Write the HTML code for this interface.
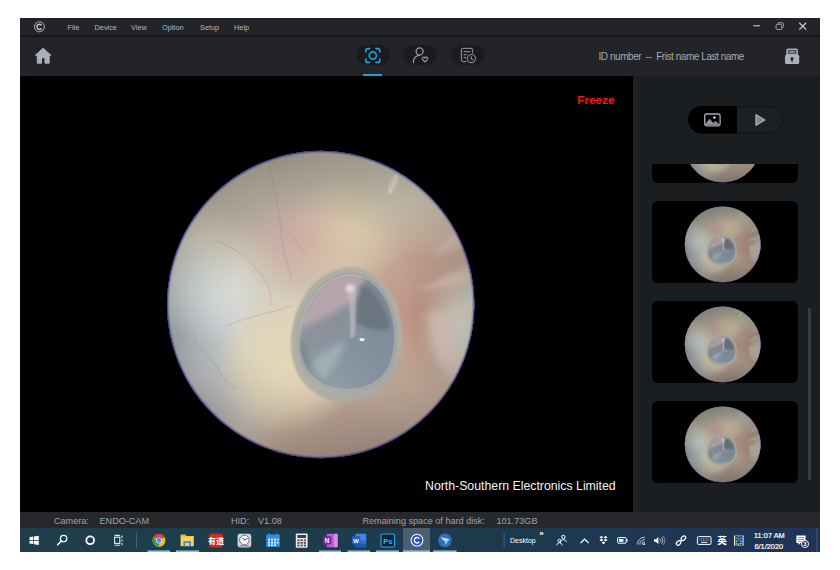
<!DOCTYPE html>
<html><head><meta charset="utf-8"><title>ENDO-CAM</title>
<style>
html,body{margin:0;padding:0;background:#fff;}
body{width:840px;height:570px;overflow:hidden;position:relative;font-family:"Liberation Sans",sans-serif;}
.abs{position:absolute;}
svg{display:block;}
#title{left:20px;top:18px;width:800px;height:17px;background:#23242a;}
#tline{left:20px;top:35px;width:800px;height:2px;background:#15161a;}
#tool{left:20px;top:37px;width:800px;height:39px;background:#222429;}
#video{left:20px;top:76px;width:613px;height:436px;background:#000;}
#side{left:633px;top:76px;width:187px;height:436px;background:#1b1e21;overflow:hidden;}
#list{left:0;top:88px;width:187px;height:348px;overflow:hidden;}
#status{left:20px;top:512px;width:800px;height:16px;background:#27282c;}
#task{left:20px;top:528px;width:800px;height:24px;background:linear-gradient(90deg,#1e3f4a 0%,#1c3a4d 62%,#1e3656 85%,#1f3358 100%);overflow:hidden;}
.menu{top:22.7px;font-size:7.35px;color:#b4b7c0;line-height:10px;white-space:nowrap;}
.pill{top:44.5px;width:34px;height:20.5px;border-radius:10.5px;background:#1a1b1e;}
.st{top:514.6px;font-size:9.1px;color:#a0a2a8;line-height:12px;white-space:nowrap;}
.thumb{left:19.3px;width:146px;height:82px;border-radius:6px;background:#000;overflow:hidden;}
.thumb svg{position:absolute;left:31.2px;top:3.4px;}
.ul{top:22.5px;height:1.5px;background:#86b9e6;}
.tt{color:#fff;font-size:7.5px;line-height:9px;white-space:nowrap;}
</style></head><body>
<svg width="0" height="0" style="position:absolute">
<defs>
    <clipPath id="cc"><circle cx="0.7" cy="3.5" r="153.7"/></clipPath>
    <clipPath id="ce"><path d="M32,-27 C46,-27 61,-17 70,4 C77,21 78,44 72,62 C65,81 47,90 27,90 C5,90 -15,78 -20,56 C-25,38 -20,14 -9,-3 C0,-17 16,-27 32,-27Z"/></clipPath>
    <filter id="b05" x="-20%" y="-20%" width="140%" height="140%"><feGaussianBlur stdDeviation="0.6"/></filter>
    <filter id="b1" x="-20%" y="-20%" width="140%" height="140%"><feGaussianBlur stdDeviation="1.2"/></filter>
    <filter id="b2" x="-20%" y="-20%" width="140%" height="140%"><feGaussianBlur stdDeviation="2"/></filter>
    <filter id="b3" x="-20%" y="-20%" width="140%" height="140%"><feGaussianBlur stdDeviation="3"/></filter>
    <filter id="b6" x="-30%" y="-30%" width="160%" height="160%"><feGaussianBlur stdDeviation="6"/></filter>
    <filter id="b12" x="-30%" y="-30%" width="160%" height="160%"><feGaussianBlur stdDeviation="12"/></filter>
    <radialGradient id="gL" cx="-152" cy="40" r="145" gradientUnits="userSpaceOnUse"><stop offset="0" stop-color="#aab4b6"/><stop offset=".35" stop-color="#c4ccce" stop-opacity=".95"/><stop offset=".7" stop-color="#d6d8ce" stop-opacity=".5"/><stop offset="1" stop-color="#dcdacc" stop-opacity="0"/></radialGradient><radialGradient id="gW" cx="-105" cy="-5" r="50" gradientUnits="userSpaceOnUse"><stop offset="0" stop-color="#dee3e4" stop-opacity=".75"/><stop offset="1" stop-color="#dee3e4" stop-opacity="0"/></radialGradient><radialGradient id="gLv" cx="-118" cy="118" r="78" gradientUnits="userSpaceOnUse"><stop offset="0" stop-color="#a8a4ac" stop-opacity=".8"/><stop offset="1" stop-color="#c0b8bc" stop-opacity="0"/></radialGradient>
    <radialGradient id="gR" cx="108" cy="12" r="115" gradientUnits="userSpaceOnUse"><stop offset="0" stop-color="#ba9080"/><stop offset=".5" stop-color="#c29e8e" stop-opacity=".9"/><stop offset="1" stop-color="#caa896" stop-opacity="0"/></radialGradient><radialGradient id="gRe" cx="180" cy="30" r="85" gradientUnits="userSpaceOnUse"><stop offset="0" stop-color="#e2e8da"/><stop offset=".5" stop-color="#d8dcce" stop-opacity=".95"/><stop offset=".75" stop-color="#d0d0c2" stop-opacity=".5"/><stop offset="1" stop-color="#c8c8b8" stop-opacity="0"/></radialGradient>
    <radialGradient id="gB" cx="25" cy="162" r="145" gradientUnits="userSpaceOnUse"><stop offset="0" stop-color="#ae968a"/><stop offset=".35" stop-color="#b49c8e" stop-opacity=".95"/><stop offset=".65" stop-color="#c0a896" stop-opacity=".8"/><stop offset="1" stop-color="#ccb09c" stop-opacity="0"/></radialGradient>
    <radialGradient id="gT" cx="-40" cy="-150" r="175" gradientUnits="userSpaceOnUse"><stop offset="0" stop-color="#aca698"/><stop offset=".5" stop-color="#bab2a2" stop-opacity=".95"/><stop offset="1" stop-color="#c8c0ac" stop-opacity="0"/></radialGradient>
    <radialGradient id="gY" cx="-32" cy="62" r="72" gradientUnits="userSpaceOnUse"><stop offset="0" stop-color="#e4d7b6"/><stop offset=".6" stop-color="#e2d5b6" stop-opacity=".7"/><stop offset="1" stop-color="#e0d4b6" stop-opacity="0"/></radialGradient>
    <radialGradient id="gY2" cx="20" cy="-65" r="60" gradientUnits="userSpaceOnUse"><stop offset="0" stop-color="#e2d0a6" stop-opacity=".75"/><stop offset="1" stop-color="#e2d0aa" stop-opacity="0"/></radialGradient>
    <radialGradient id="gP" cx="-22" cy="-60" r="60" gradientUnits="userSpaceOnUse"><stop offset="0" stop-color="#d89ea4" stop-opacity=".55"/><stop offset=".6" stop-color="#d8a8a6" stop-opacity=".28"/><stop offset="1" stop-color="#d9a8a0" stop-opacity="0"/></radialGradient>
    <radialGradient id="gV" cx="0.7" cy="3.5" r="154" gradientUnits="userSpaceOnUse"><stop offset=".55" stop-color="#32302e" stop-opacity="0"/><stop offset=".85" stop-color="#32302e" stop-opacity=".12"/><stop offset=".98" stop-color="#323034" stop-opacity=".2"/><stop offset=".99" stop-color="#20206a" stop-opacity=".45"/><stop offset="1" stop-color="#12127a" stop-opacity=".95"/></radialGradient>
    <linearGradient id="gD" x1="-25" y1="80" x2="70" y2="-10" gradientUnits="userSpaceOnUse"><stop offset="0" stop-color="#95a2a9"/><stop offset=".5" stop-color="#8492a0"/><stop offset="1" stop-color="#7b8793"/></linearGradient>
  
<g id="earbase">
    <circle cx="0.7" cy="3.5" r="156" fill="#d8cfba"/>
    <circle cx="0.7" cy="3.5" r="156" fill="url(#gT)"/>
    <circle cx="0.7" cy="3.5" r="156" fill="url(#gR)"/>
    <circle cx="0.7" cy="3.5" r="156" fill="url(#gRe)"/>
    <circle cx="0.7" cy="3.5" r="156" fill="url(#gB)"/>
    <circle cx="0.7" cy="3.5" r="156" fill="url(#gL)"/>
    <circle cx="0.7" cy="3.5" r="156" fill="url(#gLv)"/>
    <circle cx="0.7" cy="3.5" r="156" fill="url(#gW)"/>
    <circle cx="0.7" cy="3.5" r="156" fill="url(#gY)"/>
    <circle cx="0.7" cy="3.5" r="156" fill="url(#gY2)"/>
    <circle cx="0.7" cy="3.5" r="156" fill="url(#gP)"/>
    <!-- right radial light streaks -->
    <g filter="url(#b3)" opacity=".55">
      <path d="M95,-10 L160,-40 L160,-20Z" fill="#ecd3c8"/>
      <path d="M100,15 L160,5 L160,30Z" fill="#ead0c8"/>
      <path d="M110,-45 L150,-85 L160,-60Z" fill="#e8d0c4"/>
      <ellipse cx="128" cy="45" rx="14" ry="38" fill="#e6cfc9" transform="rotate(-20 128 45)"/>
    </g>
    <path d="M76.5,-124 L70,-110" stroke="#f1ebe4" stroke-width="5.5" stroke-linecap="round" opacity=".6" filter="url(#b1)"/>
    <!-- veins -->
    <g fill="none" stroke="#b0707a" stroke-width=".8" opacity=".33" filter="url(#b05)">
      <path d="M-52,-140 C-45,-110 -40,-90 -38,-60 C-36,-45 -30,-30 -28,-20"/>
      <path d="M-105,-60 C-85,-55 -70,-40 -58,-25 C-50,-15 -48,-5 -50,5"/>
      <path d="M-95,25 C-70,15 -50,12 -28,5"/>
      <path d="M-125,40 C-115,55 -105,60 -100,72 C-95,80 -88,85 -82,88"/>
      <path d="M-45,-75 C-30,-70 -20,-55 -15,-45"/>
    </g>
    </g>
<g id="drum"><!-- eardrum rim -->
    <g filter="url(#b1)">
      <path d="M32,-34 C48,-34 66,-22 76,2 C83,20 85,46 79,66 C71,90 50,101 27,101 C2,101 -21,86 -27,60 C-32,38 -27,12 -15,-6 C-5,-23 14,-34 32,-34Z" fill="#b0aea6"/>
    </g>
    <g filter="url(#b1)">
      <path d="M32,-27 C46,-27 61,-17 70,4 C77,21 78,44 72,62 C65,81 47,90 27,90 C5,90 -15,78 -20,56 C-25,38 -20,14 -9,-3 C0,-17 16,-27 32,-27Z" fill="url(#gD)"/>
    </g>
    <g clip-path="url(#ce)">
      <g filter="url(#b3)">
        <path d="M-20,22 C-12,-6 6,-25 30,-30 L46,-28 L40,-8 C30,6 8,14 -20,30Z" fill="#b8a8ac" opacity=".95"/>
        <path d="M-20,30 C-5,18 12,12 30,10 L31,32 C15,36 0,44 -18,56Z" fill="#8c9098" opacity=".7"/>
        <path d="M-16,74 C-6,58 8,46 26,40 C20,56 8,74 -2,86Z" fill="#a9b5b9" opacity=".75"/>
        <path d="M-22,40 C-24,60 -12,80 10,88 C-2,76 -12,60 -14,42Z" fill="#707c86" opacity=".6"/>
      </g>
      <g filter="url(#b2)">
        <path d="M42,-17 C55,-11 66,6 70,26 C61,32 48,28 36,21 C36,6 38,-6 42,-17Z" fill="#6b747f"/>
      </g>
      <g filter="url(#b1)">
        <path d="M26,-16 C30,-20 37,-18 36,-9 L35,34 L30,38 C31,20 30,5 26,-16Z" fill="#c8bcc0" opacity=".7"/>
        <ellipse cx="30" cy="-12.5" rx="4.5" ry="4" fill="#e2d6d8" opacity=".9"/>
      </g>
      <path d="M32,-27 C46,-27 61,-17 70,4 C77,21 78,44 72,62 C65,81 47,90 27,90 C5,90 -15,78 -20,56 C-25,38 -20,14 -9,-3 C0,-17 16,-27 32,-27Z" fill="none" stroke="#cfcaba" stroke-width="3" opacity=".55" filter="url(#b1)"/>
      <ellipse cx="42" cy="38.6" rx="2.6" ry="1.6" fill="#fff" filter="url(#b05)"/>
    </g>
    </g>
</defs>
<symbol id="ear" viewBox="-160 -160 320 320" overflow="visible">
  <g clip-path="url(#cc)"><use href="#earbase"/><use href="#drum"/></g>
  <circle cx="0.7" cy="3.5" r="154" fill="url(#gV)"/>
</symbol>
<symbol id="earT" viewBox="-160 -160 320 320" overflow="visible">
  <g clip-path="url(#cc)"><use href="#earbase"/><circle cx="0.7" cy="3.5" r="156" fill="#38403a" opacity=".12"/><use href="#drum" transform="translate(-.5,27.8) scale(1.12,.93) translate(-29,-33.5)"/><circle cx="0.7" cy="3.5" r="156" fill="#203038" opacity=".08"/></g>
  <circle cx="0.7" cy="3.5" r="154" fill="url(#gV)"/>
</symbol>
</svg>

<div id="title" class="abs"></div>
<div id="tline" class="abs"></div>
<div id="tool" class="abs"></div>
<div class="abs menu" style="left:67.5px">File</div>
<div class="abs menu" style="left:94.5px">Device</div>
<div class="abs menu" style="left:131px">View</div>
<div class="abs menu" style="left:162px">Option</div>
<div class="abs menu" style="left:200px">Setup</div>
<div class="abs menu" style="left:234px">Help</div>

<div class="abs pill" style="left:355.5px"></div>
<div class="abs pill" style="left:403px"></div>
<div class="abs pill" style="left:451px"></div>
<div class="abs" style="left:362.5px;top:74px;width:19px;height:2px;background:#1e9fe0"></div>
<svg class="abs" style="left:0;top:0" width="840" height="80" viewBox="0 0 840 80">
<!-- copyright logo -->
<circle cx="39.4" cy="26.8" r="5" fill="none" stroke="#aeb1b8" stroke-width="1"/>
<path d="M41.6,25.2 A2.6,2.6 0 1 0 41.6,28.4" fill="none" stroke="#c4c7cd" stroke-width="1.5"/>
<!-- window controls -->
<rect x="753.2" y="25" width="7" height="1.4" fill="#a2a6ae"/>
<rect x="777.8" y="22.7" width="5.6" height="5.2" rx="1.2" fill="none" stroke="#9a9ea6" stroke-width="1"/>
<rect x="776.1" y="24.3" width="5.6" height="5.2" rx="1.2" fill="#23242a" stroke="#a6aab2" stroke-width="1"/>
<path d="M799.3,22.8 L806.2,29.6 M806.2,22.8 L799.3,29.6" stroke="#cdd0d6" stroke-width="1.2" fill="none"/>
<!-- home -->
<path d="M43.1,48.2 L51,55.3 L49.2,55.3 L49.2,63.2 L45,63.2 L45,57.8 L41.5,57.8 L41.5,63.2 L37.3,63.2 L37.3,55.3 L35.3,55.3 Z" fill="#a9afbc" stroke="#a9afbc" stroke-width="1" stroke-linejoin="round"/>
<!-- lock -->
<rect x="786.3" y="48.4" width="11.6" height="8" rx="1.5" fill="#a4abb7"/>
<rect x="788" y="50" width="8.4" height="3.7" rx=".8" fill="#3c4048"/>
<rect x="789.2" y="51.2" width="6" height="1.3" fill="#aab1bd"/>
<rect x="785" y="54.8" width="14.2" height="9.2" rx="1.5" fill="#aab1bd"/>
<circle cx="792" cy="58.4" r="1.5" fill="#1c1d21"/>
<rect x="791.3" y="58.6" width="1.4" height="3.2" fill="#1c1d21"/>
<!-- scan icon -->
<g fill="none" stroke="#1da3e8" stroke-width="1.6" stroke-linecap="round">
<path d="M365.8,52 V50.6 A2,2 0 0 1 367.8,48.6 H369.6"/>
<path d="M376,48.6 H377.8 A2,2 0 0 1 379.8,50.6 V52"/>
<path d="M379.8,59 V60.4 A2,2 0 0 1 377.8,62.4 H376"/>
<path d="M369.6,62.4 H367.8 A2,2 0 0 1 365.8,60.4 V59"/>
<circle cx="372.8" cy="55.5" r="3.6"/>
</g>
<!-- person + heart -->
<g fill="none" stroke="#9c9fa8" stroke-width="1.3" stroke-linecap="round">
<circle cx="419.6" cy="51.4" r="3.5"/>
<path d="M413.3,62.6 C413.5,58.2 416,55.6 419.4,55.4"/>
<path d="M425,62 L422.4,59.4 A1.5,1.5 0 0 1 425,57.9 A1.5,1.5 0 0 1 427.6,59.4 Z" stroke-width="1.1" stroke-linejoin="round"/>
</g>
<!-- doc + clock -->
<g fill="none" stroke="#82858e" stroke-width="1.2" stroke-linecap="round">
<path d="M466,61.6 H463.2 A1.8,1.8 0 0 1 461.4,59.8 V50.2 A1.8,1.8 0 0 1 463.2,48.4 H470.8 A1.8,1.8 0 0 1 472.6,50.2 V53"/>
<path d="M464,51.6 H470 M464,54.6 H466.2 M464,57.6 H465.6"/>
<circle cx="471.4" cy="58.6" r="4.1" fill="#1a1b1e"/>
<path d="M471.2,56.6 V58.8 L472.8,60"/>
</g>
</svg>

<div class="abs" id="idtxt" style="left:598.5px;top:51px;font-size:10px;line-height:12px;color:#a6a8ae;white-space:nowrap;letter-spacing:-0.45px">ID number&nbsp; --&nbsp; Frist name Last name</div>

<div id="video" class="abs">
  <svg class="abs" style="left:139.5px;top:64.5px" width="320" height="320" viewBox="-160 -160 320 320"><use href="#ear" x="-160" y="-160" width="320" height="320"/></svg>
  <div class="abs" id="frz" style="left:557.2px;top:16.6px;font-size:11.8px;font-weight:bold;color:#ff1212;line-height:14px">Freeze</div>
  <div class="abs" id="nse" style="left:405px;top:402.7px;font-size:12.3px;color:#f4f4f4;line-height:14px;white-space:nowrap">North-Southern Electronics Limited</div>
</div>

<div id="side" class="abs">
  <div class="abs" style="left:0;top:0;width:5px;height:436px;background:#1e2023"></div>
  <svg class="abs" style="left:0;top:0" width="187" height="80" viewBox="633 76 187 80">
<rect x="689" y="106.6" width="94" height="26.4" rx="13.2" fill="#1d2023" stroke="#111315" stroke-width="1"/>
<path d="M737,106.1 H701.7 A13.7,13.7 0 0 0 701.7,133.5 H737 Z" fill="#000"/>
<rect x="704.7" y="114" width="15.4" height="11.8" rx="1.8" fill="none" stroke="#a7abb6" stroke-width="1.3"/>
<path d="M705.2,124.8 L709.6,119.2 L713.2,123.4 L715.2,121.4 L719.6,124.8 Z" fill="#8f939e" stroke="#8f939e" stroke-width=".8" stroke-linejoin="round"/>
<circle cx="714.4" cy="117.5" r="1.2" fill="#dfe2e8"/>
<path d="M756,114.8 L764.8,120 L756,125.2 Z" fill="#7f838d" stroke="#a5a9b3" stroke-width="1.4" stroke-linejoin="round"/>
</svg>
  <div id="list" class="abs">
    <div class="abs thumb" style="top:-63.5px"><svg width="79" height="79" viewBox="-160 -160 320 320"><use href="#earT" x="-160" y="-160" width="320" height="320"/></svg></div>
    <div class="abs thumb" style="top:36.5px"><svg width="79" height="79" viewBox="-160 -160 320 320"><use href="#earT" x="-160" y="-160" width="320" height="320"/></svg></div>
    <div class="abs thumb" style="top:136.5px"><svg width="79" height="79" viewBox="-160 -160 320 320"><use href="#earT" x="-160" y="-160" width="320" height="320"/></svg></div>
    <div class="abs thumb" style="top:236.5px"><svg width="79" height="79" viewBox="-160 -160 320 320"><use href="#earT" x="-160" y="-160" width="320" height="320"/></svg></div>
  </div>
  <div class="abs" style="left:174.5px;top:232px;width:3px;height:172px;border-radius:1.5px;background:#3a3d42"></div>
</div>

<div id="status" class="abs"></div>
<div class="abs st" id="s1" style="left:54px">Camera:</div>
<div class="abs st" id="s2" style="left:99.5px">ENDO-CAM</div>
<div class="abs st" id="s3" style="left:231px">HID:</div>
<div class="abs st" id="s4" style="left:258px">V1.08</div>
<div class="abs st" id="s5" style="left:362.5px">Remaining space of hard disk:</div>
<div class="abs st" id="s6" style="left:496.5px">101.73GB</div>
<div id="task" class="abs">
<svg class="abs" style="left:0;top:0" width="800" height="24" viewBox="20 528 800 24">
<!-- active app highlight -->
<rect x="403" y="528" width="27" height="24" fill="#4a5f6f"/>
<!-- underlines -->
<g fill="#86bdea">
<rect x="147.5" y="550.4" width="22.5" height="1.6"/><rect x="176" y="550.4" width="23" height="1.6"/>
<rect x="319" y="550.4" width="22" height="1.6"/><rect x="347.5" y="550.4" width="22.5" height="1.6"/>
<rect x="376" y="550.4" width="23" height="1.6"/><rect x="403" y="550.4" width="27" height="1.6"/>
<rect x="433" y="550.4" width="23.5" height="1.6"/>
</g>
<!-- windows logo -->
<g fill="#fff">
<path d="M29.5,537.2 L33.3,536.6 V540 H29.5Z M34,536.5 L38.8,535.8 V540 H34Z M29.5,540.7 H33.3 V544.1 L29.5,543.5Z M34,540.7 H38.8 V545 L34,544.2Z"/>
</g>
<!-- search -->
<circle cx="63.6" cy="538.6" r="3.2" fill="none" stroke="#fff" stroke-width="1.3"/>
<path d="M61.3,541 L57.6,544.8" stroke="#fff" stroke-width="1.5" stroke-linecap="round"/>
<!-- cortana -->
<circle cx="90.2" cy="540.3" r="3.9" fill="none" stroke="#fff" stroke-width="1.8"/>
<!-- task view -->
<g fill="none" stroke="#e8eaec" stroke-width="1.1">
<rect x="114.6" y="537.2" width="5.2" height="6.2"/>
<path d="M114.6,535.4 H119.8 M114.6,545.2 H119.8"/>
<path d="M122,535.4 V538 M122,539.6 V541.4 M122,543 V545.2"/>
</g>
<rect x="136" y="533" width="1" height="15" fill="#4b6070"/>
<!-- chrome -->
<circle cx="159" cy="540.4" r="6.4" fill="#e8bf2a"/>
<path d="M159,540.4 L153.5,537.2 A6.4,6.4 0 0 1 164.6,537.3 Z" fill="#dc4437"/>
<path d="M159,534 A6.4,6.4 0 0 1 164.6,537.3 L159,537.3 Z" fill="#dc4437"/>
<path d="M153.5,537.2 A6.4,6.4 0 0 0 158.2,546.75 L160.8,541.6 L157,541.6 Z" fill="#2a9d4c"/>
<circle cx="159" cy="540.4" r="3" fill="#f4f4f4"/>
<circle cx="159" cy="540.4" r="2.3" fill="#4a8af4"/>
<!-- explorer -->
<path d="M180.6,534.6 H185.4 L186.6,536 H193.6 V537.4 H180.6Z" fill="#e9b73c"/>
<rect x="180.6" y="536.6" width="13.2" height="9.6" fill="#f8d45c"/>
<path d="M183.4,546.2 V541.2 H191 V546.2 H189.2 V543 H185.2 V546.2Z" fill="#3f8fe0"/>
<!-- red app -->
<rect x="209.2" y="533.6" width="13.8" height="13.8" rx="2.6" fill="#e3211f"/>
<text x="216.1" y="543.6" font-size="8" font-weight="bold" fill="#fff" text-anchor="middle" font-family="Liberation Sans, Noto Sans CJK SC, sans-serif">&#x6709;&#x9053;</text>
<!-- clock app -->
<rect x="237.6" y="533.8" width="13.6" height="13.6" rx="2.4" fill="#d5d7da"/>
<circle cx="244.4" cy="540" r="4.8" fill="#f6f6f6" stroke="#6c7076" stroke-width="1"/>
<path d="M244.4,540 L242.4,537.6 M244.4,540 L247.6,538.4" stroke="#33363b" stroke-width=".9" fill="none"/>
<rect x="239.6" y="545.2" width="9.6" height="1.4" fill="#8b8f96"/>
<!-- calendar -->
<rect x="266.2" y="534.6" width="13.6" height="12.4" rx="1.2" fill="#2d8eea"/>
<rect x="268.4" y="533.4" width="1.6" height="3" fill="#2d8eea"/><rect x="276" y="533.4" width="1.6" height="3" fill="#2d8eea"/>
<g fill="#dfeeff"><rect x="268" y="538.6" width="2" height="2"/><rect x="271" y="538.6" width="2" height="2"/><rect x="274" y="538.6" width="2" height="2"/><rect x="277" y="538.6" width="1.6" height="2"/>
<rect x="268" y="541.6" width="2" height="2"/><rect x="271" y="541.6" width="2" height="2"/><rect x="274" y="541.6" width="2" height="2"/><rect x="277" y="541.6" width="1.6" height="2"/>
<rect x="268" y="544.4" width="2" height="1.6"/><rect x="271" y="544.4" width="2" height="1.6"/><rect x="274" y="544.4" width="2" height="1.6"/></g>
<!-- calculator -->
<rect x="295.8" y="533.4" width="11.8" height="14.4" rx="1" fill="#ececec"/>
<rect x="297.4" y="535" width="8.6" height="3" fill="#3a3d42"/>
<g fill="#4a4d52"><rect x="297.4" y="539.4" width="2.2" height="1.8"/><rect x="300.6" y="539.4" width="2.2" height="1.8"/><rect x="303.8" y="539.4" width="2.2" height="1.8"/>
<rect x="297.4" y="542" width="2.2" height="1.8"/><rect x="300.6" y="542" width="2.2" height="1.8"/><rect x="303.8" y="542" width="2.2" height="1.8"/>
<rect x="297.4" y="544.6" width="2.2" height="1.8"/><rect x="300.6" y="544.6" width="2.2" height="1.8"/><rect x="303.8" y="544.6" width="2.2" height="1.8"/></g>
<!-- onenote -->
<rect x="326.6" y="533.8" width="11" height="13.4" rx="1" fill="#c75ad6"/>
<rect x="334" y="533.8" width="3.6" height="13.4" fill="#e08be8"/>
<rect x="323" y="536.2" width="8.4" height="8.4" rx=".8" fill="#7a1fb0"/>
<text x="327.2" y="543.2" font-size="6.5" font-weight="bold" fill="#fff" text-anchor="middle" font-family="Liberation Sans, sans-serif">N</text>
<!-- word -->
<rect x="355.4" y="533.8" width="10.8" height="13.4" rx="1" fill="#3f8ae6"/>
<rect x="355.4" y="540.4" width="10.8" height="3.4" fill="#2a6fd0"/><rect x="355.4" y="543.8" width="10.8" height="3.4" rx="1" fill="#1d56b0"/>
<rect x="352" y="536.2" width="8.4" height="8.4" rx=".8" fill="#1f5fc6"/>
<text x="356.2" y="543" font-size="6" font-weight="bold" fill="#fff" text-anchor="middle" font-family="Liberation Sans, sans-serif">W</text>
<!-- photoshop -->
<rect x="381" y="534" width="13.6" height="13" rx="1.4" fill="#0b2238" stroke="#2fa6f2" stroke-width="1.1"/>
<text x="387.8" y="543.6" font-size="7.5" font-weight="bold" fill="#39b0ff" text-anchor="middle" font-family="Liberation Sans, sans-serif">Ps</text>
<!-- active app icon -->
<circle cx="417" cy="540.2" r="6.4" fill="#fff"/>
<circle cx="417" cy="540.2" r="5.4" fill="#1f4fd8"/>
<path d="M419.2,538.6 A2.7,2.7 0 1 0 419.2,541.8" fill="none" stroke="#fff" stroke-width="1.5"/>
<!-- bird app -->
<circle cx="445" cy="540.4" r="6.8" fill="#2f6fb6"/>
<path d="M440.6,537.2 L449.6,539.2 L445.4,545.2 L444.6,541.2 Z" fill="#8cc0ee"/>
<path d="M440.6,537.2 L449.6,539.2 L444.6,541.2 Z" fill="#c2e0fa"/>
<rect x="503.6" y="533" width="1" height="15" fill="#4b6070"/>
<text x="510" y="543.2" font-size="7" fill="#fff" font-family="Liberation Sans, sans-serif">Desktop</text>
<text x="539.2" y="535.6" font-size="8" font-weight="bold" fill="#fff" font-family="Liberation Sans, sans-serif">&#xBB;</text>
<!-- people -->
<g fill="none" stroke="#fff" stroke-width="1">
<circle cx="563.4" cy="537" r="1.7"/><path d="M560.4,543 C560.6,540.6 562,539.6 563.4,539.6 C564.8,539.6 566.2,540.6 566.4,542"/>
<circle cx="559.4" cy="540.6" r="1.4"/><path d="M556.8,545.4 C557,543.6 558,542.8 559.4,542.8 C560.8,542.8 561.8,543.6 562,545.4"/>
</g>
<path d="M580.6,543 L584.6,539 L588.6,543" fill="none" stroke="#fff" stroke-width="1.2"/>
<!-- dropbox -->
<g fill="#fff"><path d="M601.4,536 L603.4,537.3 L601.4,538.6 L599.4,537.3Z M605.6,536 L607.6,537.3 L605.6,538.6 L603.6,537.3Z M601.4,538.8 L603.4,540.1 L601.4,541.4 L599.4,540.1Z M605.6,538.8 L607.6,540.1 L605.6,541.4 L603.6,540.1Z M603.5,541.6 L605.3,542.8 L603.5,544.2 L601.7,542.8Z"/></g>
<!-- battery -->
<rect x="617.6" y="537.6" width="8.6" height="5.6" rx="1" fill="none" stroke="#fff" stroke-width="1"/>
<rect x="619" y="539" width="4.4" height="2.8" fill="#fff"/><rect x="626.6" y="539.2" width="1" height="2.4" fill="#fff"/>
<!-- wifi-like -->
<g fill="none" stroke="#c8ccd2" stroke-width="1"><path d="M637.6,544.6 A7,7 0 0 1 644.8,537.2"/><path d="M639.8,544.6 A4.8,4.8 0 0 1 644.8,539.6"/><path d="M642,544.6 A2.6,2.6 0 0 1 644.8,542"/></g>
<circle cx="644.2" cy="544.2" r=".9" fill="#fff"/>
<!-- volume -->
<path d="M654,539.2 H655.8 L658.4,537 V544 L655.8,541.8 H654Z" fill="#fff"/>
<g fill="none" stroke="#c8ccd2" stroke-width=".9"><path d="M659.8,538.6 A2.6,2.6 0 0 1 659.8,542.4"/><path d="M661.4,537.2 A4.6,4.6 0 0 1 661.4,543.8"/><path d="M663,536 A6.4,6.4 0 0 1 663,545" stroke="#8d97a4"/></g>
<!-- link/pen -->
<g fill="none" stroke="#fff" stroke-width="1.2"><ellipse cx="683.4" cy="538.2" rx="2.6" ry="1.8" transform="rotate(-45 683.4 538.2)"/><ellipse cx="678.6" cy="543" rx="2.6" ry="1.8" transform="rotate(-45 678.6 543)"/><path d="M680,541.6 L682,539.6"/></g>
<!-- keyboard -->
<rect x="697.4" y="536.6" width="13.6" height="7.8" rx="1" fill="none" stroke="#fff" stroke-width="1"/>
<path d="M699.4,538.8 H709 M699.4,540.4 H709" stroke="#c0c6ce" stroke-width=".8" stroke-dasharray="1 .8"/>
<path d="M701,542.4 H707.4" stroke="#fff" stroke-width=".9"/>
<text x="722" y="543.8" font-size="9.6" font-weight="bold" fill="#fff" text-anchor="middle" font-family="Liberation Sans, Noto Sans CJK SC, sans-serif">&#x82F1;</text>
<rect x="734" y="535.6" width="9.6" height="9.8" fill="#f2f2f2"/>
<text x="738.8" y="543.8" font-size="8.6" font-weight="bold" fill="#14213a" text-anchor="middle" font-family="Liberation Sans, Noto Sans CJK SC, sans-serif">&#x958B;</text>
<text x="769.4" y="537.8" font-size="7.4" fill="#fff" stroke="#fff" stroke-width=".2" text-anchor="middle" font-family="Liberation Sans, sans-serif">11:07 AM</text>
<text x="768.8" y="549.2" font-size="7.4" fill="#fff" stroke="#fff" stroke-width=".2" text-anchor="middle" font-family="Liberation Sans, sans-serif">6/1/2020</text>
<!-- notifications -->
<path d="M796.4,535.6 H805.6 V543 H800.4 L798.4,545 V543 H796.4Z" fill="#fff"/>
<path d="M798,537.6 H804 M798,539.4 H804 M798,541.2 H802" stroke="#5c6c84" stroke-width=".7"/>
<circle cx="805" cy="544" r="3.6" fill="#1f3357" stroke="#fff" stroke-width=".9"/>
<text x="805" y="546.4" font-size="6" font-weight="bold" fill="#fff" text-anchor="middle" font-family="Liberation Sans, sans-serif">3</text>
<rect x="816.6" y="528" width=".8" height="24" fill="#54657e"/>
</svg>
</div>
</body></html>
